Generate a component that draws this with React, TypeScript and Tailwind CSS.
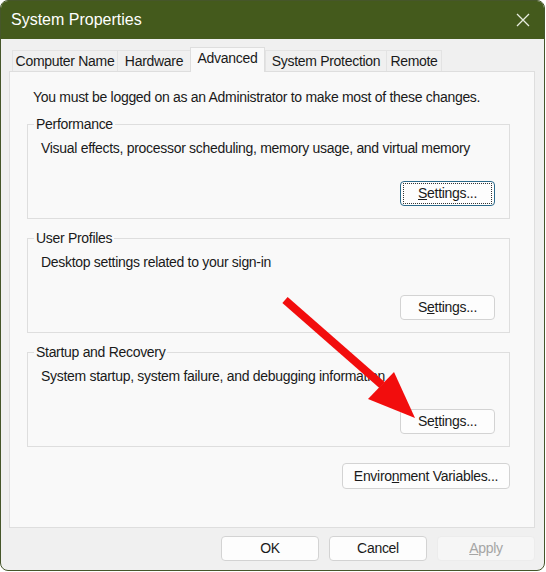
import React from "react";

const font = { fontFamily: '"Segoe UI", "Liberation Sans", Arial, sans-serif' };

function Btn({
  children,
  className = "",
  focused = false,
  disabled = false,
}: {
  children: React.ReactNode;
  className?: string;
  focused?: boolean;
  disabled?: boolean;
}) {
  return (
    <div
      className={
        "flex items-center justify-center rounded-[4px] border text-[14px] tracking-[-0.3px] " +
        (disabled
          ? "border-[#ececec] bg-[#f6f6f6] text-[#a5a5a5] "
          : focused
          ? "border-[#2c6a8a] bg-[#fdfdfd] text-[#1a1a1a] "
          : "border-[#d3d3d3] bg-[#fdfdfd] text-[#1a1a1a] ") +
        className
      }
    >
      {focused ? (
        <div className="flex h-[21px] w-[89px] items-center justify-center border border-dotted border-[#333]">
          {children}
        </div>
      ) : (
        children
      )}
    </div>
  );
}

function Group({
  title,
  desc,
  btn,
  focused = false,
}: {
  title: string;
  desc: string;
  btn: React.ReactNode;
  focused?: boolean;
}) {
  return (
    <div className="relative h-[95px] border border-[#dedede] bg-[#f9f9f9]">
      <div className="absolute left-[6px] top-[-10px] bg-[#f9f9f9] px-[2px] text-[14px] leading-[18px] tracking-[-0.3px] text-[#1a1a1a]">
        {title}
      </div>
      <div className="pl-[13px] pt-[14px] text-[14px] leading-[18px] tracking-[-0.3px] text-[#1a1a1a]">
        {desc}
      </div>
      <div className="flex justify-end pr-[14px] pt-[24px]">
        <Btn className="h-[25px] w-[95px]" focused={focused}>
          {btn}
        </Btn>
      </div>
    </div>
  );
}

export default function App() {
  const tabs = [
    { label: "Computer Name", w: 105 },
    { label: "Hardware", w: 73 },
    { label: "Advanced", w: 75, sel: true },
    { label: "System Protection", w: 121 },
    { label: "Remote", w: 56 },
  ];
  return (
    <div className="relative h-[572px] w-[546px] bg-white" style={font}>
      <div className="flex h-[571px] w-[545px] flex-col overflow-hidden rounded-[8px] border border-[#46562a] bg-[#f0f0f0]">
        <div className="flex h-[38px] shrink-0 items-center justify-between bg-[#445a1c] pl-[10px] pr-[14px] text-white">
          <span className="text-[16px]">System Properties</span>
          <svg width="14" height="14" viewBox="0 0 14 14">
            <path d="M1 1 L13 13 M13 1 L1 13" stroke="#e8ecdf" strokeWidth="1.3" />
          </svg>
        </div>
        <div className="flex flex-1 flex-col px-[8px]">
          <div className="flex h-[32px] items-end pl-[3px]">
            {tabs.map((t) =>
              t.sel ? (
                <div
                  key={t.label}
                  className="relative z-10 mb-[-1px] flex h-[25px] items-center justify-center border border-b-0 border-[#dedede] bg-[#f9f9f9] pb-[3px] text-[14px] tracking-[-0.3px] text-[#1a1a1a]"
                  style={{ width: t.w }}
                >
                  {t.label}
                </div>
              ) : (
                <div
                  key={t.label}
                  className="flex h-[21px] items-center justify-center border border-b-0 border-r-0 border-[#e3e3e3] bg-[#f0f0f0] text-[14px] tracking-[-0.3px] text-[#1a1a1a] last:border-r"
                  style={{ width: t.w }}
                >
                  {t.label}
                </div>
              )
            )}
          </div>
          <div className="mr-[1px] h-[457px] border border-[#dedede] bg-[#f9f9f9]">
            <div className="pl-[23px] pt-[16px] text-[14px] leading-[18px] tracking-[-0.3px] text-[#1a1a1a]">
              You must be logged on as an Administrator to make most of these changes.
            </div>
            <div className="ml-[17px] mr-[24px] mt-[18px] flex flex-col gap-[19px]">
              <Group
                title="Performance"
                desc="Visual effects, processor scheduling, memory usage, and virtual memory"
                focused
                btn={
                  <span>
                    <u>S</u>ettings...
                  </span>
                }
              />
              <Group
                title="User Profiles"
                desc="Desktop settings related to your sign-in"
                btn={
                  <span>
                    S<u>e</u>ttings...
                  </span>
                }
              />
              <Group
                title="Startup and Recovery"
                desc="System startup, system failure, and debugging information"
                btn={
                  <span>
                    Se<u>t</u>tings...
                  </span>
                }
              />
            </div>
            <div className="mr-[24px] mt-[16px] flex justify-end">
              <Btn className="h-[26px] w-[168px]">
                <span>
                  Enviro<u>n</u>ment Variables...
                </span>
              </Btn>
            </div>
          </div>
          <div className="mr-[1px] mt-[8px] flex justify-end gap-[10px]">
            <Btn className="h-[25px] w-[98px]">OK</Btn>
            <Btn className="h-[25px] w-[98px]">Cancel</Btn>
            <Btn className="h-[25px] w-[98px]" disabled>
              <span>
                <u>A</u>pply
              </span>
            </Btn>
          </div>
        </div>
      </div>
      <svg className="pointer-events-none absolute left-0 top-0" width="546" height="572">
        <line x1="285" y1="300" x2="382" y2="385" stroke="#f20d0d" strokeWidth="8" />
        <polygon points="368,399 394,372 415,418" fill="#f20d0d" />
      </svg>
    </div>
  );
}
